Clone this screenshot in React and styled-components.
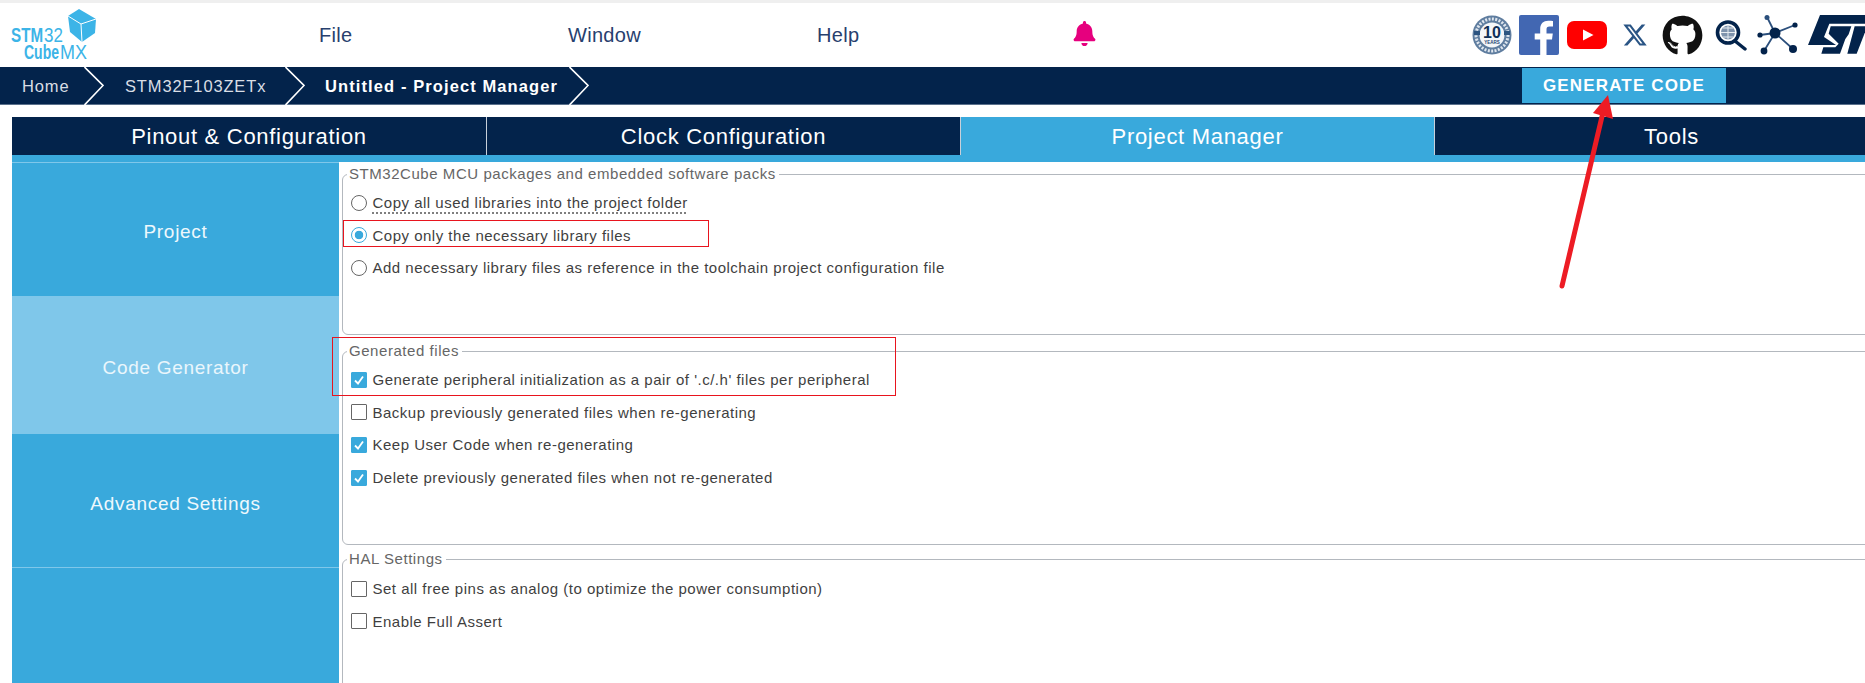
import React from 'react';
import styled, { createGlobalStyle } from 'styled-components';
import { FaBell, FaGithub } from 'react-icons/fa';
import { FaXTwitter } from 'react-icons/fa6';

const NAVY = '#03234b';
const BLUE = '#39a9dc';
const LIGHT_BLUE = '#7fc7ea';

const GlobalStyle = createGlobalStyle`
  html, body {
    margin: 0;
    padding: 0;
    background: #fff;
    overflow: hidden;
    font-family: "Liberation Sans", Arial, sans-serif;
  }
`;

const Page = styled.div`
  position: relative;
  width: 1865px;
  height: 683px;
  overflow: hidden;
  background: #fff;
`;

const TopStrip = styled.div`
  height: 3px;
  background: #efefef;
`;

const Header = styled.header`
  display: flex;
  align-items: center;
  height: 64px;
`;

const LogoSlot = styled.div`
  flex: 0 0 319px;
  height: 64px;
`;

const MenuItem = styled.div`
  flex: 0 0 249px;
  font-size: 20px;
  letter-spacing: 0.3px;
  color: #27406e;
`;

const BellSlot = styled.div`
  display: flex;
  margin-left: 6px;
  margin-top: -4px;
  color: #e6007e;
  font-size: 25px;
`;

const IconRow = styled.div`
  display: flex;
  align-items: center;
  margin-left: 375px;
  flex-shrink: 0;
`;

const IconSlot = styled.div`
  display: flex;
  flex-shrink: 0;
  margin-left: ${(p) => p.$gap || 0}px;
  color: ${(p) => p.$color || NAVY};
`;

const CrumbBar = styled.nav`
  display: flex;
  align-items: center;
  height: 38px;
  background: ${NAVY};
  border-bottom: 1px solid #5b718c;
  box-sizing: border-box;
  color: #fff;
  font-size: 16.5px;
  letter-spacing: 0.85px;
`;

const Crumb = styled.span`
  font-weight: ${(p) => (p.$current ? 700 : 400)};
  letter-spacing: ${(p) => (p.$current ? '1.1px' : 'inherit')};
  color: ${(p) => (p.$current ? '#fff' : '#d9dee5')};
  flex: 0 0 ${(p) => p.$width}px;
  padding: 2px 0 0 ${(p) => p.$pad}px;
  box-sizing: border-box;
  white-space: nowrap;
`;

const Chevron = styled.svg`
  flex-shrink: 0;
  width: 20px;
  height: 38px;
`;

const GenerateButton = styled.button`
  margin-left: 933px;
  width: 204px;
  height: 35px;
  margin-top: -1px;
  flex-shrink: 0;
  border: 0;
  padding: 2px 0 0;
  background: ${BLUE};
  color: #fff;
  font-family: inherit;
  font-size: 17px;
  font-weight: 700;
  letter-spacing: 1.15px;
`;

const TabBar = styled.div`
  display: flex;
  width: 1897px;
  height: 38px;
  margin: 12px 0 0 12px;
  background: ${NAVY};
`;

const Tab = styled.div`
  flex: 0 0 ${(p) => p.$width}px;
  display: flex;
  align-items: center;
  justify-content: center;
  box-sizing: border-box;
  padding-top: 2px;
  border-right: 1px solid #c8d0da;
  background: ${(p) => (p.$active ? BLUE : NAVY)};
  color: #fff;
  font-size: 22px;
  letter-spacing: 0.7px;
`;

const TabStrip = styled.div`
  height: 7px;
  margin-left: 12px;
  background: ${BLUE};
`;

const Main = styled.div`
  display: flex;
  margin-left: 12px;
  height: 521px;
`;

const Sidebar = styled.aside`
  flex: 0 0 327px;
  display: flex;
  flex-direction: column;
  border-top: 1px solid ${LIGHT_BLUE};
`;

const SideItem = styled.div`
  flex: 0 0 ${(p) => p.$height}px;
  display: flex;
  align-items: center;
  justify-content: center;
  box-sizing: border-box;
  padding-top: ${(p) => p.$drop || 4}px;
  background: ${(p) => (p.$active ? LIGHT_BLUE : BLUE)};
  border-bottom: ${(p) => (p.$line ? `1px solid ${LIGHT_BLUE}` : '0')};
  color: ${(p) => (p.$active ? '#eaf6fc' : '#eef8fd')};
  font-size: 19px;
  letter-spacing: 0.7px;
`;

const Content = styled.div`
  flex: 1;
  min-width: 0;
  padding: 2px 0 0 3px;
`;

const Group = styled.fieldset`
  box-sizing: border-box;
  width: 1560px;
  height: ${(p) => p.$height}px;
  margin: 0 0 ${(p) => p.$after}px;
  padding: ${(p) => p.$top}px 0 0 7.5px;
  border: 1.5px solid #b3b8be;
  border-radius: 6px;
`;

const GroupTitle = styled.legend`
  margin-left: -3.5px;
  padding: 0 3px 0 2px;
  line-height: 20px;
  font-size: 15px;
  letter-spacing: 0.55px;
  color: #666;
`;

const Row = styled.label`
  display: flex;
  align-items: center;
  gap: 6px;
  height: 32.6px;
  font-size: 15px;
  letter-spacing: 0.5px;
  color: #3f3f3f;
`;

const Hint = styled.span`
  text-decoration: underline dotted #555;
  text-underline-offset: 4px;
`;

const Radio = styled.span`
  flex: 0 0 14px;
  height: 14px;
  border-radius: 50%;
  border: 1px solid ${(p) => (p.$on ? BLUE : '#666')};
  background: ${(p) =>
    p.$on ? `radial-gradient(circle, ${BLUE} 0 4px, #fff 4.6px)` : '#fff'};
`;

const CheckBox = styled.span`
  flex: 0 0 14px;
  height: 14px;
  display: flex;
  border: 1px solid ${(p) => (p.$on ? BLUE : '#666')};
  border-radius: 1px;
  background: ${(p) => (p.$on ? BLUE : '#fff')};
`;

const RedBox = styled.div`
  position: absolute;
  left: ${(p) => p.$left}px;
  top: ${(p) => p.$top}px;
  width: ${(p) => p.$width}px;
  height: ${(p) => p.$height}px;
  border: 1px solid #e8141e;
  box-sizing: border-box;
`;

const ArrowLayer = styled.svg`
  position: absolute;
  left: 0;
  top: 0;
  width: 1865px;
  height: 683px;
  pointer-events: none;
`;

function Logo() {
  const text = { fontFamily: 'Liberation Sans', fontSize: 20, fill: '#3cb4e7' };
  return (
    <svg width="100" height="64" viewBox="0 3 100 64">
      <path d="M79 9L96 19L95 33L82 42L70 32L68 16Z" fill="#3cb4e7" />
      <path d="M68 16L81 24L96 19M81 24L82 42" fill="none" stroke="#fff" strokeWidth="1" />
      <text transform="translate(11 42) scale(0.76 1)" fontWeight="700" {...text}>STM</text>
      <text transform="translate(44 42) scale(0.85 1)" {...text}>32</text>
      <text transform="translate(24 59) scale(0.7 1)" fontWeight="700" {...text}>Cube</text>
      <text transform="translate(60 59) scale(0.9 1)" {...text}>MX</text>
    </svg>
  );
}

function Badge() {
  return (
    <svg width="40" height="40" viewBox="0 0 40 40">
      <circle cx="20" cy="20" r="19.5" fill="#5f7d9f" />
      <circle cx="20" cy="20" r="16" fill="none" stroke="#dfe6ee" strokeWidth="3" strokeDasharray="2 1.4" />
      <circle cx="20" cy="20" r="12.5" fill="#f4f6f9" />
      <path d="M2 18H8M32 18H38" stroke="#2c5480" strokeWidth="4" />
      <text x="20" y="23" textAnchor="middle" fontFamily="Liberation Sans" fontWeight="700" fontSize="16" fill="#0f2f57">10</text>
      <text x="20" y="29" textAnchor="middle" fontFamily="Liberation Sans" fontWeight="700" fontSize="4.5" fill="#1d4473">YEARS</text>
    </svg>
  );
}

function Facebook() {
  return (
    <svg width="40" height="40" viewBox="0 0 40 40">
      <rect width="40" height="40" rx="2" fill="#4267b2" />
      <path d="M27.5 40V24.6H33L33.8 18.4H27.5V14.6C27.5 12.8 28.1 11.6 30.6 11.6H34V6C33.3 5.9 31.4 5.8 29.2 5.8C24.5 5.8 21.2 8.7 21.2 13.9V18.4H15.7V24.6H21.2V40Z" fill="#fff" />
    </svg>
  );
}

function YouTube() {
  return (
    <svg width="40" height="28" viewBox="0 0 40 28">
      <rect width="40" height="28" rx="7" fill="#f00" />
      <path d="M16 8.5L26.5 14L16 19.5Z" fill="#fff" />
    </svg>
  );
}

function Lens() {
  return (
    <svg width="33" height="31" viewBox="0 0 33 31">
      <path d="M20 21L30 29" stroke={NAVY} strokeWidth="3.4" strokeLinecap="round" />
      <circle cx="13" cy="12.5" r="10.5" fill="#fff" stroke={NAVY} strokeWidth="3.6" />
      <circle cx="13" cy="12.5" r="7" fill="#7e93ad" />
      <path d="M6 12.5H20M13 5.5V19.5M8 8H18M8 17H18" stroke="#e5ebf1" strokeWidth="1" />
    </svg>
  );
}

function Network() {
  return (
    <svg width="41" height="41" viewBox="0 0 41 41">
      <path d="M18 18L10 2M18 18L38 10M18 18L3 20M18 18L7 36M18 18L36 34" stroke="#2b4f7c" strokeWidth="1.8" />
      <circle cx="18" cy="18" r="5.5" fill={NAVY} />
      <circle cx="10" cy="2.5" r="2.5" fill="#2b4f7c" />
      <circle cx="38" cy="10" r="2.6" fill={NAVY} />
      <circle cx="3" cy="20" r="2.6" fill={NAVY} />
      <circle cx="7" cy="36" r="3.4" fill={NAVY} />
      <circle cx="36" cy="34" r="4" fill={NAVY} />
    </svg>
  );
}

function StLogo() {
  return (
    <svg width="57" height="40" viewBox="0 0 171 120">
      <path d="M36 0H171V26H64L48 66L84 90H0Z" fill={NAVY} />
      <path d="M68 34H130L122 58L112 72L96 116H40L46 97H82L92 86L62 56Z" fill={NAVY} />
      <path d="M140 34H171V52L146 116H118Z" fill={NAVY} />
    </svg>
  );
}

function Chev() {
  return (
    <Chevron viewBox="0 0 20 38">
      <path d="M0.5 0L19 18.5L0.5 38" fill="none" stroke="#fff" strokeWidth="1.6" />
    </Chevron>
  );
}

function Tick() {
  return (
    <svg width="14" height="14" viewBox="0 0 14 14">
      <path d="M3 7.5L6 10.5L11 3.5" fill="none" stroke="#fff" strokeWidth="1.8" />
    </svg>
  );
}

function CheckRow({ on, children }) {
  return (
    <Row>
      <CheckBox $on={on}>{on && <Tick />}</CheckBox>
      <span>{children}</span>
    </Row>
  );
}

export default function App() {
  return (
    <Page>
      <GlobalStyle />
      <TopStrip />
      <Header>
        <LogoSlot>
          <Logo />
        </LogoSlot>
        <MenuItem>File</MenuItem>
        <MenuItem>Window</MenuItem>
        <MenuItem>Help</MenuItem>
        <BellSlot>
          <FaBell />
        </BellSlot>
        <IconRow>
          <IconSlot><Badge /></IconSlot>
          <IconSlot $gap={7}><Facebook /></IconSlot>
          <IconSlot $gap={8}><YouTube /></IconSlot>
          <IconSlot $gap={15} $color="#2a5585"><FaXTwitter size={26} /></IconSlot>
          <IconSlot $gap={14} $color="#111"><FaGithub size={41} /></IconSlot>
          <IconSlot $gap={12}><Lens /></IconSlot>
          <IconSlot $gap={9}><Network /></IconSlot>
          <IconSlot $gap={10}><StLogo /></IconSlot>
        </IconRow>
      </Header>

      <CrumbBar>
        <Crumb $width={84} $pad={22}>Home</Crumb>
        <Chev />
        <Crumb $width={181} $pad={21}>STM32F103ZETx</Crumb>
        <Chev />
        <Crumb $current $width={264} $pad={20}>Untitled - Project Manager</Crumb>
        <Chev />
        <GenerateButton>GENERATE CODE</GenerateButton>
      </CrumbBar>

      <TabBar>
        <Tab $width={475}>Pinout &amp; Configuration</Tab>
        <Tab $width={474}>Clock Configuration</Tab>
        <Tab $width={474} $active>Project Manager</Tab>
        <Tab $width={474}>Tools</Tab>
      </TabBar>
      <TabStrip />

      <Main>
        <Sidebar>
          <SideItem $height={134} $line>Project</SideItem>
          <SideItem $active $height={137}>Code Generator</SideItem>
          <SideItem $height={134} $line $drop={6}>Advanced Settings</SideItem>
          <SideItem $height={115} />
        </Sidebar>
        <Content>
          <Group $height={171} $after={6} $top={2.5}>
            <GroupTitle>STM32Cube MCU packages and embedded software packs</GroupTitle>
            <Row><Radio /><Hint>Copy all used libraries into the project folder</Hint></Row>
            <Row><Radio $on /><span>Copy only the necessary library files</span></Row>
            <Row><Radio /><span>Add necessary library files as reference in the toolchain project configuration file</span></Row>
          </Group>
          <Group $height={204} $after={4} $top={2.5}>
            <GroupTitle>Generated files</GroupTitle>
            <CheckRow on>Generate peripheral initialization as a pair of '.c/.h' files per peripheral</CheckRow>
            <CheckRow>Backup previously generated files when re-generating</CheckRow>
            <CheckRow on>Keep User Code when re-generating</CheckRow>
            <CheckRow on>Delete previously generated files when not re-generated</CheckRow>
          </Group>
          <Group $height={200} $after={0} $top={3.5}>
            <GroupTitle>HAL Settings</GroupTitle>
            <CheckRow>Set all free pins as analog (to optimize the power consumption)</CheckRow>
            <CheckRow>Enable Full Assert</CheckRow>
          </Group>
        </Content>
      </Main>

      <RedBox $left={343} $top={220} $width={366} $height={27} />
      <RedBox $left={332} $top={337} $width={564} $height={59} />
      <ArrowLayer viewBox="0 0 1865 683">
        <path d="M1562 286L1604 108" stroke="#ed1c24" strokeWidth="5" strokeLinecap="round" />
        <path d="M1608 95L1593 113L1613 119Z" fill="#ed1c24" />
      </ArrowLayer>
    </Page>
  );
}
